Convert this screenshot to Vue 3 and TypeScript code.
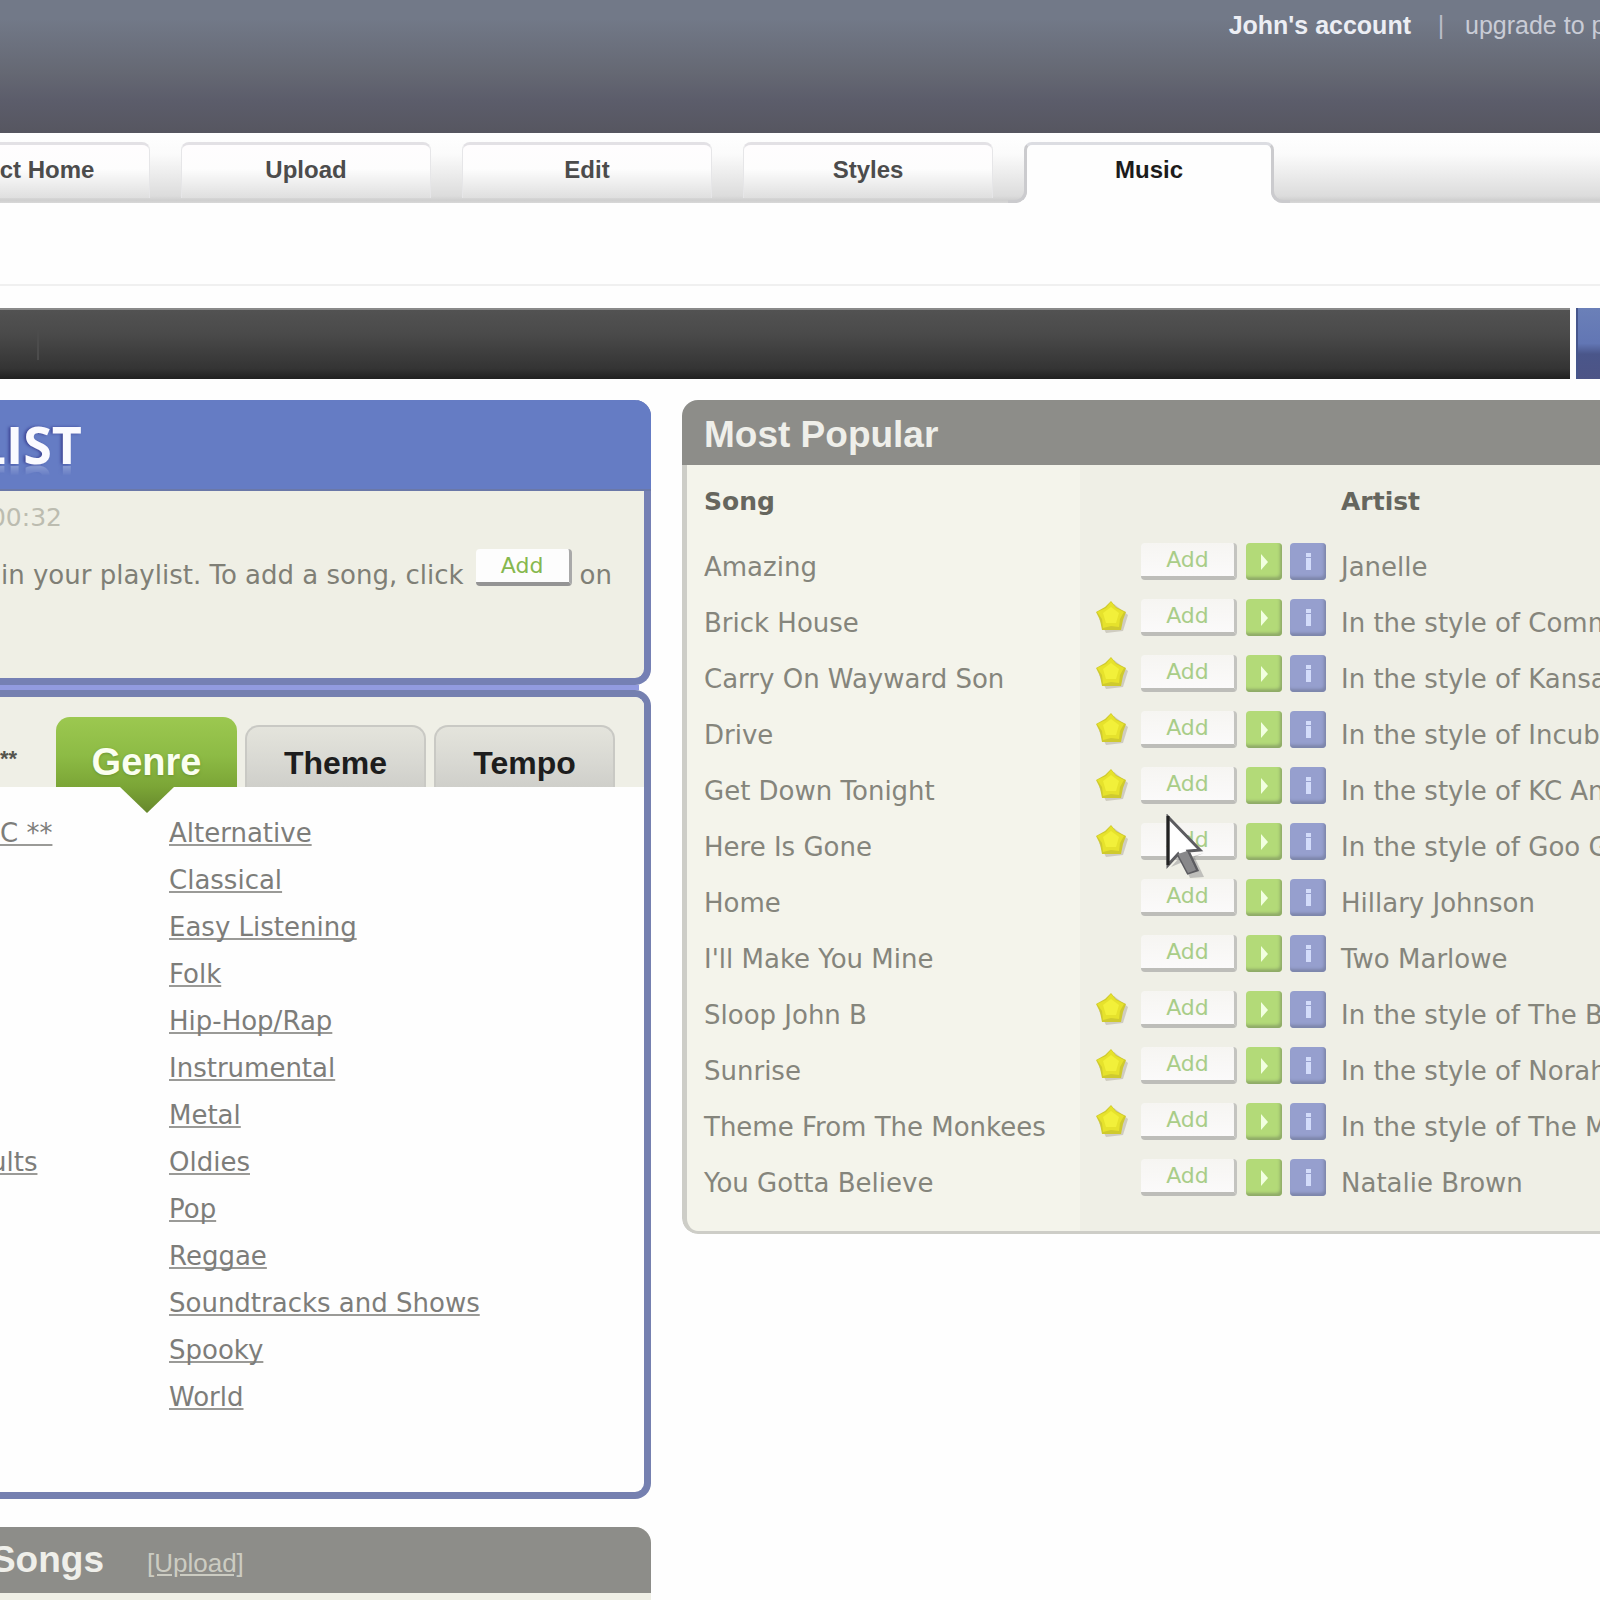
<script setup lang="ts">
interface Song {
  title: string
  artist: string
  starred: boolean
}

const navTabs: string[] = ['ct Home', 'Upload', 'Edit', 'Styles', 'Music']
const activeNav = 'Music'

const filterTabs: string[] = ['Genre', 'Theme', 'Tempo']
const activeFilter = 'Genre'

const genres: string[] = [
  'Alternative',
  'Classical',
  'Easy Listening',
  'Folk',
  'Hip-Hop/Rap',
  'Instrumental',
  'Metal',
  'Oldies',
  'Pop',
  'Reggae',
  'Soundtracks and Shows',
  'Spooky',
  'World',
]

const songs: Song[] = [
  { title: 'Amazing', artist: 'Janelle', starred: false },
  { title: 'Brick House', artist: 'In the style of Comm', starred: true },
  { title: 'Carry On Wayward Son', artist: 'In the style of Kansa', starred: true },
  { title: 'Drive', artist: 'In the style of Incub', starred: true },
  { title: 'Get Down Tonight', artist: 'In the style of KC An', starred: true },
  { title: 'Here Is Gone', artist: 'In the style of Goo G', starred: true },
  { title: 'Home', artist: 'Hillary Johnson', starred: false },
  { title: "I'll Make You Mine", artist: 'Two Marlowe', starred: false },
  { title: 'Sloop John B', artist: 'In the style of The B', starred: true },
  { title: 'Sunrise', artist: 'In the style of Norah', starred: true },
  { title: 'Theme From The Monkees', artist: 'In the style of The M', starred: true },
  { title: 'You Gotta Believe', artist: 'Natalie Brown', starred: false },
]
const hoveredSong = 'Here Is Gone'
</script>

<template>
  <div class="page">
    <header class="account">
      <a href="#" class="account-name">John's account</a>
      <span class="account-sep">|</span>
      <a href="#" class="upgrade">upgrade to p</a>
    </header>

    <nav class="nav">
      <a v-for="tab in navTabs" :key="tab" href="#" class="nav-tab" :class="{ active: tab === activeNav }">{{ tab }}</a>
    </nav>

    <div class="subnav"></div>

    <div class="toolbar">
      <div class="toolbar-dark"><i class="toolbar-divider"></i></div>
      <button class="toolbar-blue" type="button" aria-label="Continue"></button>
    </div>

    <main class="columns">
      <div class="left">
        <section class="playlist">
          <div class="playlist-head"><h1>LIST</h1></div>
          <p class="duration"><span>00:32</span></p>
          <p class="hint">
            <span>in your playlist. To add a song, click</span>
            <button class="add strong" type="button">Add</button>
            <span>on</span>
          </p>
        </section>

        <div class="joint"></div>

        <section class="browser">
          <div class="filters">
            <span class="filters-label">**</span>
            <button
              v-for="tab in filterTabs"
              :key="tab"
              type="button"
              class="filter"
              :class="{ active: tab === activeFilter }"
            >
              {{ tab }}
            </button>
          </div>
          <div class="lists">
            <ul class="collections">
              <li><a href="#">C **</a></li>
              <li class="later"><a href="#">ults</a></li>
            </ul>
            <ul>
              <li v-for="genre in genres" :key="genre"><a href="#">{{ genre }}</a></li>
            </ul>
          </div>
        </section>

        <section class="mine">
          <div class="mine-head">
            <h2>Songs</h2>
            <a href="#">[Upload]</a>
          </div>
        </section>
      </div>

      <section class="popular">
        <h2 class="popular-head">Most Popular</h2>
        <div class="popular-body">
          <table>
            <thead>
              <tr>
                <th class="song" scope="col">Song</th>
                <th class="actions"></th>
                <th class="artist" scope="col">Artist</th>
              </tr>
            </thead>
            <tbody>
              <tr v-for="song in songs" :key="song.title">
                <td class="song">{{ song.title }}</td>
                <td class="actions">
                  <div class="action-row">
                    <span class="star-slot">
                      <svg v-if="song.starred" viewBox="0 0 34 36" width="34" height="36" aria-hidden="true">
                        <path d="M20 5 L34 16 L29 32 L12 34 L5 20 Z" fill="#cfccc0" />
                        <path d="M17 2 L22 8 L32 13 L29 21 L27 31 L17 31 L8 31 L6 21 L2 13 L11 8 Z" fill="#cfca2e" />
                        <path d="M17 3 L22 9 L30 13 L26 20 L25 28 L17 27 L9 29 L8 20 L3 13 L12 9 Z" fill="#e6e22c" />
                        <path d="M17 8 L25 14 L22 24 L12 24 L9 14 Z" fill="#f2f03a" />
                      </svg>
                    </span>
                    <button class="add" type="button">Add</button>
                    <button class="square play" type="button" aria-label="Play">
                      <svg viewBox="0 0 36 36" width="36" height="36">
                        <path d="M15 10 L22 18 L15 26 Z" fill="#f2ffe0" />
                      </svg>
                    </button>
                    <button class="square info" type="button" aria-label="Info">
                      <svg viewBox="0 0 36 36" width="36" height="36">
                        <path d="M16 9 h5 v4 h-5 Z M16 14 h5 v12 h-5 Z" fill="#d3dcfa" />
                      </svg>
                    </button>
                    <svg
                      v-if="song.title === hoveredSong"
                      class="cursor"
                      viewBox="0 0 42 68"
                      width="42"
                      height="68"
                      aria-hidden="true"
                    >
                      <path d="M5 53 L14 43 L24 64 L38 63 L28 42 L38 39 Z" fill="#77777a" opacity="0.4" />
                      <path
                        d="M2 3 L2 51 L12 40 L22 59 L31 56 L22 37 L34 36 Z"
                        fill="#ffffff"
                        stroke="#5c5c60"
                        stroke-width="3"
                      />
                      <path d="M12 40 L22 59 L30 56 L21 37 Z" fill="#88888a" />
                      <path d="M2 2 L2 51" stroke="#222222" stroke-width="3" />
                    </svg>
                  </div>
                </td>
                <td class="artist">{{ song.artist }}</td>
              </tr>
            </tbody>
          </table>
        </div>
      </section>
    </main>
  </div>
</template>

<style>
body {
  margin: 0;
  background: #fefefe;
}
</style>

<style scoped>
* {
  box-sizing: border-box;
}
.page {
  height: 100vh;
  overflow: hidden;
  font-family: "DejaVu Sans", Verdana, sans-serif;
  font-size: 26px;
  color: #85857c;
}
h1,
h2,
p,
ul {
  margin: 0;
  padding: 0;
  list-style: none;
}
button {
  border: 0;
  padding: 0;
  font: inherit;
}

/* account strip */
.account {
  display: flex;
  justify-content: flex-end;
  height: 133px;
  padding-top: 8px;
  background: linear-gradient(#727988 0%, #727988 14%, #656873 55%, #5c5d6b 75%, #565660 100%);
  font: 25px/34px "Liberation Sans", Arial, sans-serif;
  white-space: nowrap;
}
.account a {
  text-decoration: none;
}
.account-name {
  font-weight: bold;
  color: #eceef4;
}
.account-sep {
  width: 54px;
  padding-left: 6px;
  text-align: center;
  color: #b9bcc8;
}
.upgrade {
  width: 135px;
  color: #c9ccd6;
}

/* main tabs */
.nav {
  display: flex;
  gap: 31px;
  height: 70px;
  margin-left: -100px;
  padding-top: 9px;
  overflow: hidden;
  background: linear-gradient(#ffffff 0%, #fbfbfb 30%, #dcdcdc 90%, #cfcfcf 96%, #d8d8d8 100%);
}
.nav-tab {
  position: relative;
  flex: none;
  width: 250px;
  height: 56px;
  border: 1px solid #e6e6e8;
  border-top: 3px solid #e3e1e5;
  border-bottom: 0;
  border-radius: 8px 8px 0 0;
  background: linear-gradient(#fffdfe 0%, #fdfdfd 45%, #dfdfdf 100%);
  font: bold 24px/50px "Liberation Sans", Arial, sans-serif;
  text-align: center;
  text-decoration: none;
  color: #4c4c4c;
}
.nav-tab:first-child {
  padding-left: 44px;
}
.nav-tab.active {
  height: 61px;
  border: 3px solid #cbcbce;
  border-top-color: #dcdde2;
  border-bottom: 0;
  background: #fefefe;
  color: #1c1c1c;
}
.nav-tab.active::before,
.nav-tab.active::after {
  content: "";
  position: absolute;
  bottom: 0;
  width: 16px;
  height: 20px;
  border-bottom: 3px solid #cbcbce;
}
.nav-tab.active::before {
  right: 100%;
  border-right: 3px solid #cbcbce;
  border-bottom-right-radius: 12px;
  box-shadow: 5px 5px 0 #fefefe;
}
.nav-tab.active::after {
  left: 100%;
  border-left: 3px solid #cbcbce;
  border-bottom-left-radius: 12px;
  box-shadow: -5px 5px 0 #fefefe;
}
.subnav {
  height: 83px;
  border-bottom: 2px solid #f0f0f0;
}

/* dark toolbar */
.toolbar {
  display: flex;
  gap: 6px;
  height: 71px;
  margin-top: 22px;
}
.toolbar-dark {
  flex: 1;
  padding: 20px 0 0 37px;
  border-top: 2px solid #8a8a8a;
  background: linear-gradient(#525252 0%, #4a4a4a 35%, #343434 85%, #202020 100%);
}
.toolbar-divider {
  display: block;
  width: 2px;
  height: 30px;
  background: #4c4c4c;
}
.toolbar-blue {
  width: 24px;
  border-left: 2px solid #46568c;
  background: linear-gradient(#6b80b8 0%, #6276b4 50%, #4a568a 65%, #4d5486 100%);
}

/* columns */
.columns {
  display: grid;
  grid-template-columns: 651px 1fr;
  gap: 31px;
  margin-top: 21px;
}
.playlist {
  height: 285px;
  border: 7px solid #7580b4;
  border-width: 0 7px 7px 0;
  border-radius: 0 16px 16px 0;
  background: #efefe5;
}
.playlist-head {
  height: 91px;
  margin-right: -7px;
  padding-top: 18px;
  border-radius: 0 16px 0 0;
  border-bottom: 2px solid #6a78a8;
  background: #657cc4;
}
.playlist-head h1 {
  display: flex;
  justify-content: flex-end;
  width: 82px;
  font: 700 52px/52px "Open Sans", "Noto Sans", sans-serif;
  color: #fafaff;
  text-shadow: -2px 0 3px #3d4596;
  -webkit-box-reflect: below -10px linear-gradient(transparent 70%, rgba(255, 255, 255, 0.4));
}
.duration {
  display: flex;
  justify-content: flex-end;
  width: 62px;
  height: 52px;
  font-size: 25px;
  line-height: 54px;
  color: #bcbcb0;
}
.hint {
  display: flex;
  gap: 8px;
  padding-left: 1px;
  line-height: 64px;
  white-space: nowrap;
  color: #7f7f76;
}
.hint .add {
  margin: 6px 0 0 4px;
}
.joint {
  height: 5px;
  margin-right: 12px;
  background: #929be0;
}
.browser {
  height: 809px;
  border: 7px solid #7580b0;
  border-left: 0;
  border-radius: 0 16px 16px 0;
  background: #fefefe;
}
.filters {
  display: flex;
  align-items: flex-end;
  gap: 8px;
  height: 90px;
  border-radius: 0 9px 0 0;
  background: #efefe6;
}
.filters-label {
  width: 48px;
  font: bold 22px/56px "Liberation Sans", Arial, sans-serif;
  color: #55554f;
}
.filter {
  position: relative;
  width: 181px;
  height: 62px;
  border: 2px solid #c9c9c4;
  border-bottom: 0;
  border-radius: 14px 14px 0 0;
  background: linear-gradient(#e4e4dc, #d9d9d3 55%, #cfcfca);
  font: bold 32px/60px "Liberation Sans", Arial, sans-serif;
  padding-top: 6px;
  color: #1d1d1d;
}
.filter.active {
  height: 70px;
  padding-top: 20px;
  border: 0;
  background: linear-gradient(#9cc850, #8dbb45 55%, #7ba536);
  font-size: 38px;
  line-height: 50px;
  color: #fbfff0;
  text-shadow: 0 1px 3px #6b9430;
}
.filter.active::after {
  content: "";
  position: absolute;
  left: 64px;
  top: 100%;
  width: 54px;
  height: 26px;
  background: linear-gradient(#7ba536, #66872c);
  clip-path: polygon(0 0, 100% 0, 50% 100%);
}
.lists {
  display: flex;
  padding-top: 23px;
  line-height: 47px;
  white-space: nowrap;
}
.lists a {
  color: #7d7d7a;
  text-decoration-color: #9a9a97;
  text-decoration-thickness: 2px;
  text-underline-offset: 2px;
  text-decoration-skip-ink: none;
}
.collections {
  width: 169px;
}
.later {
  margin: 282px 0 0 -10px;
}
.mine {
  height: 120px;
  margin-top: 28px;
  border-radius: 0 16px 0 0;
  background: #efefe6;
  overflow: hidden;
}
.mine-head {
  display: flex;
  height: 66px;
  background: #8d8d89;
  font-family: "Liberation Sans", Arial, sans-serif;
  line-height: 66px;
}
.mine-head h2 {
  display: flex;
  justify-content: flex-end;
  width: 104px;
  font-size: 37px;
  color: #efefea;
}
.mine-head a {
  margin-left: 43px;
  padding-top: 3px;
  color: #ccccc2;
}

/* popular songs */
.popular {
  align-self: start;
  min-width: 0;
  overflow: hidden;
  border-radius: 16px 0 0 16px;
}
.popular-head {
  height: 65px;
  padding-left: 22px;
  background: #8d8d89;
  font: bold 37px/70px "Liberation Sans", Arial, sans-serif;
  color: #efefea;
}
.popular-body {
  padding-bottom: 20px;
  border: 5px solid #cdcdc7;
  border-width: 0 0 3px 5px;
  border-radius: 0 0 0 16px;
  background: linear-gradient(90deg, #f4f4eb 393px, #efefe6 393px);
  overflow: hidden;
}
table {
  width: 100%;
  table-layout: fixed;
  border-collapse: collapse;
  white-space: nowrap;
}
th,
td {
  height: 56px;
  padding: 0;
  text-align: left;
  vertical-align: middle;
  line-height: 56px;
}
th {
  height: 74px;
  font-size: 25px;
  font-weight: bold;
  color: #66665e;
}
th.song,
td.song {
  width: 393px;
  padding-left: 17px;
}
th.actions,
td.actions {
  width: 261px;
}
.action-row {
  position: relative;
  display: flex;
  height: 56px;
  padding: 4px 0 0 14px;
}
.star-slot {
  width: 47px;
  height: 36px;
  line-height: 0;
}
.add {
  width: 96px;
  height: 37px;
  border-right: 3px solid #c4c4c0;
  border-bottom: 4px solid #bdbdb9;
  border-radius: 4px;
  background: linear-gradient(#f6f5f2, #fbfafa);
  font-size: 22px;
  line-height: 30px;
  color: #a9cd88;
}
.action-row .add {
  margin-right: 9px;
}
.add.strong {
  border-right-color: #a9a9a9;
  border-bottom-color: #949494;
  background: #fdfdfd;
  color: #86b84e;
}
.square {
  width: 36px;
  height: 37px;
  margin-right: 8px;
  border-radius: 4px;
  line-height: 0;
}
.play {
  background: #b3da78;
  box-shadow: inset -2px -3px 3px #8faa68;
}
.info {
  background: #969fce;
  box-shadow: inset -2px -3px 3px #7d86ab;
}
.cursor {
  position: absolute;
  left: 86px;
  top: -5px;
}
</style>
